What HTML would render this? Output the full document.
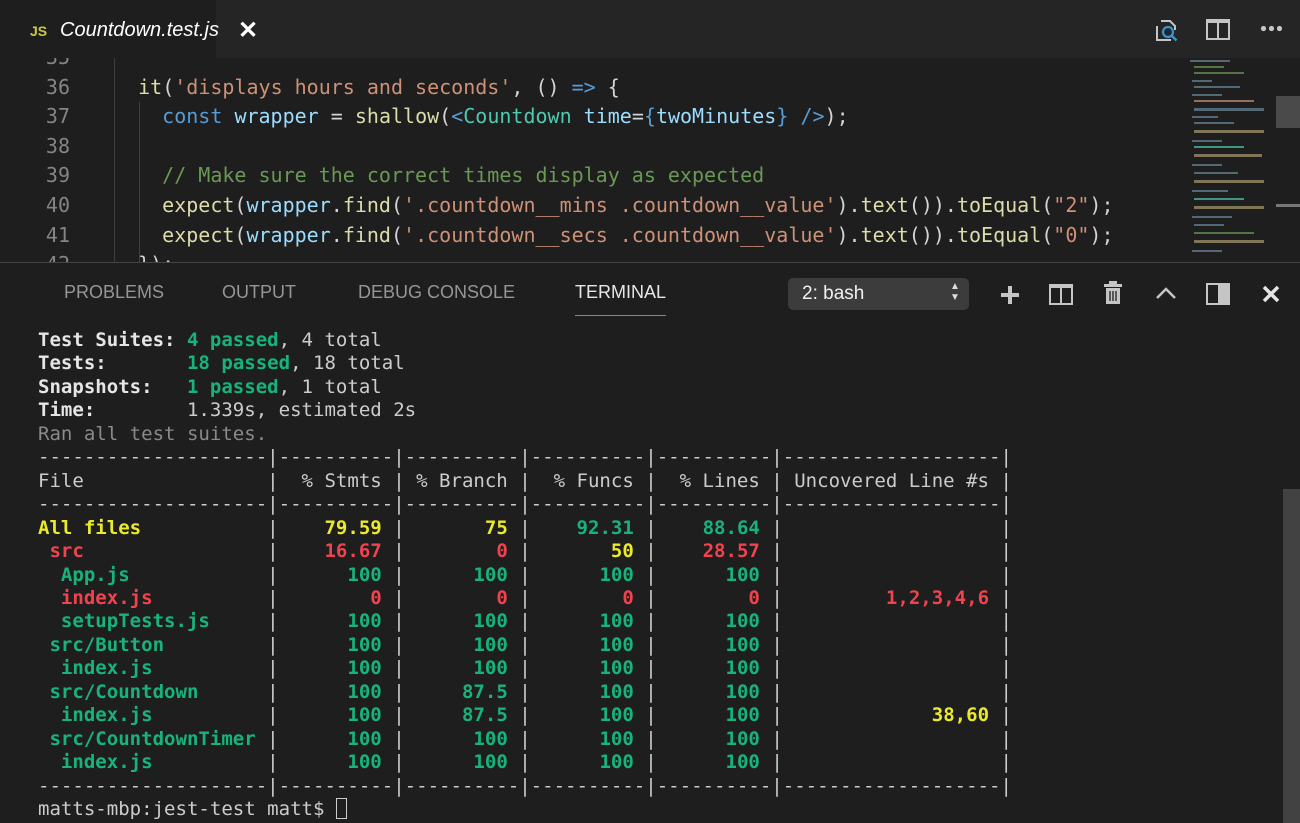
<!DOCTYPE html>
<html><head><meta charset="utf-8"><style>
*{margin:0;padding:0;box-sizing:border-box}
body{width:1300px;height:822px;background:#1e1e1e;overflow:hidden;position:relative;font-family:"Liberation Sans",sans-serif}
.tabbar{position:absolute;left:0;top:0;width:1300px;height:58px;background:#252526}
.tab{position:absolute;left:0;top:0;width:216px;height:58px;background:#1e1e1e}
.tab .js{position:absolute;left:30px;top:23px;color:#cbcb41;font-size:14px;font-weight:bold}
.tab .nm{position:absolute;left:60px;top:19px;color:#fff;font-size:20px;font-style:italic}
.editor{position:absolute;left:0;top:58px;width:1300px;height:204px;background:#1e1e1e;overflow:hidden}
.code{position:absolute;left:0;top:-15px;font-family:"DejaVu Sans Mono",monospace;font-size:20px;line-height:29.6px;white-space:pre;color:#d4d4d4}
.ln{display:inline-block;width:70px;text-align:right;color:#858585;margin-right:44px}
.s{color:#ce9178}.k{color:#569cd6}.f{color:#dcdcaa}.v{color:#9cdcfe}.t{color:#4ec9b0}.c{color:#6a9955}
.guide{position:absolute;width:1px;background:#404040}
.panel{position:absolute;left:0;top:262px;width:1300px;height:560px;background:#1e1e1e;border-top:1px solid #444}
.ptab{position:absolute;top:19px;font-size:18px;color:#969696}
.term{position:absolute;left:38px;top:66px;font-family:"DejaVu Sans Mono",monospace;font-size:19.05px;line-height:23.45px;white-space:pre;color:#cccccc}
.g{color:#17b37b;font-weight:bold}.y{color:#eaea2a;font-weight:bold}.r{color:#f1434d;font-weight:bold}.b{font-weight:bold;color:#e6e6e6}.d{color:#8a8a8a}
</style></head><body>
<div class="tabbar"><div class="tab"><span class="js">JS</span><span class="nm">Countdown.test.js</span></div>
<span style="position:absolute;left:238px;top:16px;color:#fff;font-size:24px;font-weight:bold">✕</span>
<svg style="position:absolute;left:1153px;top:17px" width="28" height="26" viewBox="0 0 28 26"><path d="M8 4h9l5 5v4M4 9v14h14" fill="none" stroke="#c5c5c5" stroke-width="2"/><circle cx="15" cy="15" r="5" fill="none" stroke="#3794d6" stroke-width="2.2"/><path d="M18.5 18.5l5 5" stroke="#3794d6" stroke-width="2.5"/></svg>
<svg style="position:absolute;left:1206px;top:19px" width="24" height="22"><rect x="1" y="1" width="22" height="19" fill="none" stroke="#c5c5c5" stroke-width="2"/><rect x="1" y="1" width="22" height="3" fill="#c5c5c5"/><path d="M12 2v18" stroke="#c5c5c5" stroke-width="2"/></svg>
<svg style="position:absolute;left:1260px;top:25px" width="24" height="8"><circle cx="3.5" cy="3.5" r="2.6" fill="#c5c5c5"/><circle cx="11.5" cy="3.5" r="2.6" fill="#c5c5c5"/><circle cx="19.5" cy="3.5" r="2.6" fill="#c5c5c5"/></svg>
</div>
<div class="editor">
<div class="guide" style="left:114px;top:0;height:204px"></div>
<div class="guide" style="left:139px;top:44px;height:160px"></div>
<div class="code"><span class="ln">35</span>
<span class="ln">36</span>  <span class="f">it</span>(<span class="s">'displays hours and seconds'</span>, () <span class="k">=&gt;</span> {
<span class="ln">37</span>    <span class="k">const</span> <span class="v">wrapper</span> = <span class="f">shallow</span>(<span class="k">&lt;</span><span class="t">Countdown</span> <span class="v">time</span>=<span class="k">{</span><span class="v">twoMinutes</span><span class="k">}</span> <span class="k">/&gt;</span>);
<span class="ln">38</span>
<span class="ln">39</span>    <span class="c">// Make sure the correct times display as expected</span>
<span class="ln">40</span>    <span class="f">expect</span>(<span class="v">wrapper</span>.<span class="f">find</span>(<span class="s">'.countdown__mins .countdown__value'</span>).<span class="f">text</span>()).<span class="f">toEqual</span>(<span class="s">"2"</span>);
<span class="ln">41</span>    <span class="f">expect</span>(<span class="v">wrapper</span>.<span class="f">find</span>(<span class="s">'.countdown__secs .countdown__value'</span>).<span class="f">text</span>()).<span class="f">toEqual</span>(<span class="s">"0"</span>);
<span class="ln">42</span>  });</div>
<svg style="position:absolute;left:1188px;top:0" width="90" height="204">
<g fill="#6a8a9a" opacity=".7">
<rect x="2" y="2" width="40" height="2"/><rect x="6" y="8" width="30" height="2" fill="#6a9955"/><rect x="6" y="14" width="50" height="2" fill="#6a9955"/><rect x="4" y="22" width="20" height="2"/><rect x="6" y="28" width="46" height="2"/><rect x="4" y="36" width="30" height="2"/><rect x="6" y="42" width="60" height="2" fill="#ce9178"/><rect x="6" y="50" width="70" height="3"/><rect x="4" y="58" width="26" height="2"/><rect x="6" y="64" width="40" height="2"/><rect x="6" y="72" width="70" height="3" fill="#aa9a70"/><rect x="4" y="82" width="30" height="2"/><rect x="6" y="88" width="50" height="2" fill="#4ec9b0"/><rect x="6" y="96" width="68" height="3" fill="#aa9a70"/><rect x="4" y="106" width="30" height="2"/><rect x="6" y="114" width="44" height="2"/><rect x="6" y="122" width="70" height="3" fill="#aa9a70"/><rect x="4" y="132" width="36" height="2"/><rect x="6" y="140" width="50" height="2" fill="#4ec9b0"/><rect x="6" y="148" width="70" height="3" fill="#aa9a70"/><rect x="4" y="158" width="40" height="2"/><rect x="6" y="166" width="30" height="2"/><rect x="6" y="174" width="60" height="2" fill="#6a9955"/><rect x="6" y="182" width="70" height="3" fill="#aa9a70"/><rect x="4" y="192" width="30" height="2"/></g></svg>
<div style="position:absolute;left:1276px;top:38px;width:24px;height:32px;background:#4a4a4a"></div>
<div style="position:absolute;left:1276px;top:146px;width:24px;height:3px;background:#777"></div>
</div>
<div class="panel">
<span class="ptab" style="left:64px">PROBLEMS</span>
<span class="ptab" style="left:222px">OUTPUT</span>
<span class="ptab" style="left:358px">DEBUG CONSOLE</span>
<span class="ptab" style="left:575px;color:#e7e7e7">TERMINAL</span>
<div style="position:absolute;left:575px;top:52px;width:91px;height:1px;background:#888"></div>
<div style="position:absolute;left:788px;top:15px;width:181px;height:32px;background:#3c3c3c;border-radius:5px"><span style="position:absolute;left:14px;top:5px;color:#f0f0f0;font-size:19px">2: bash</span><span style="position:absolute;left:162px;top:3px;color:#ddd;font-size:10px;line-height:11px">▲<br>▼</span></div>
<svg style="position:absolute;left:999px;top:21px" width="22" height="22"><path d="M11 2v18M2 11h18" stroke="#c5c5c5" stroke-width="4"/></svg>
<svg style="position:absolute;left:1049px;top:21px" width="24" height="21"><rect x="1" y="1" width="22" height="19" fill="none" stroke="#c5c5c5" stroke-width="2"/><rect x="1" y="1" width="22" height="3" fill="#c5c5c5"/><path d="M12 2v18" stroke="#c5c5c5" stroke-width="2"/></svg>
<svg style="position:absolute;left:1103px;top:18px" width="20" height="24"><rect x="1" y="3" width="18" height="3" fill="#c5c5c5"/><rect x="6" y="0" width="8" height="4" fill="#c5c5c5"/><path d="M3 7h14v16H3z" fill="#c5c5c5"/><path d="M7 10v10M10 10v10M13 10v10" stroke="#1e1e1e" stroke-width="1.3"/></svg>
<svg style="position:absolute;left:1155px;top:23px" width="22" height="14"><path d="M2 12L11 3l9 9" fill="none" stroke="#c5c5c5" stroke-width="2.5"/></svg>
<svg style="position:absolute;left:1206px;top:20px" width="24" height="22"><rect x="1" y="1" width="22" height="20" fill="none" stroke="#c5c5c5" stroke-width="2"/><rect x="12" y="1" width="11" height="20" fill="#c5c5c5"/></svg>
<svg style="position:absolute;left:1262px;top:22px" width="18" height="18"><path d="M2 2l14 14M16 2L2 16" stroke="#e5e5e5" stroke-width="3.5"/></svg>
<div style="position:absolute;left:1283px;top:226px;width:17px;height:334px;background:#424242"></div>
<div class="term"><span class="b">Test Suites: </span><span class="g">4 passed</span>, 4 total
<span class="b">Tests:       </span><span class="g">18 passed</span>, 18 total
<span class="b">Snapshots:   </span><span class="g">1 passed</span>, 1 total
<span class="b">Time:</span>        1.339s, estimated 2s
<span class="d">Ran all test suites.</span>
--------------------|----------|----------|----------|----------|-------------------|
File                |  % Stmts | % Branch |  % Funcs |  % Lines | Uncovered Line #s |
--------------------|----------|----------|----------|----------|-------------------|
<span class="y">All files           </span>|<span class="y">    79.59 </span>|<span class="y">       75 </span>|<span class="g">    92.31 </span>|<span class="g">    88.64 </span>|                   |
<span class="r"> src                </span>|<span class="r">    16.67 </span>|<span class="r">        0 </span>|<span class="y">       50 </span>|<span class="r">    28.57 </span>|                   |
<span class="g">  App.js            </span>|<span class="g">      100 </span>|<span class="g">      100 </span>|<span class="g">      100 </span>|<span class="g">      100 </span>|                   |
<span class="r">  index.js          </span>|<span class="r">        0 </span>|<span class="r">        0 </span>|<span class="r">        0 </span>|<span class="r">        0 </span>|<span class="r">         1,2,3,4,6 </span>|
<span class="g">  setupTests.js     </span>|<span class="g">      100 </span>|<span class="g">      100 </span>|<span class="g">      100 </span>|<span class="g">      100 </span>|                   |
<span class="g"> src/Button         </span>|<span class="g">      100 </span>|<span class="g">      100 </span>|<span class="g">      100 </span>|<span class="g">      100 </span>|                   |
<span class="g">  index.js          </span>|<span class="g">      100 </span>|<span class="g">      100 </span>|<span class="g">      100 </span>|<span class="g">      100 </span>|                   |
<span class="g"> src/Countdown      </span>|<span class="g">      100 </span>|<span class="g">     87.5 </span>|<span class="g">      100 </span>|<span class="g">      100 </span>|                   |
<span class="g">  index.js          </span>|<span class="g">      100 </span>|<span class="g">     87.5 </span>|<span class="g">      100 </span>|<span class="g">      100 </span>|<span class="y">             38,60 </span>|
<span class="g"> src/CountdownTimer </span>|<span class="g">      100 </span>|<span class="g">      100 </span>|<span class="g">      100 </span>|<span class="g">      100 </span>|                   |
<span class="g">  index.js          </span>|<span class="g">      100 </span>|<span class="g">      100 </span>|<span class="g">      100 </span>|<span class="g">      100 </span>|                   |
--------------------|----------|----------|----------|----------|-------------------|
matts-mbp:jest-test matt$ <span style="display:inline-block;width:11px;height:21px;border:1.5px solid #ccc;vertical-align:-4px"></span></div>
</div>
</body></html>
